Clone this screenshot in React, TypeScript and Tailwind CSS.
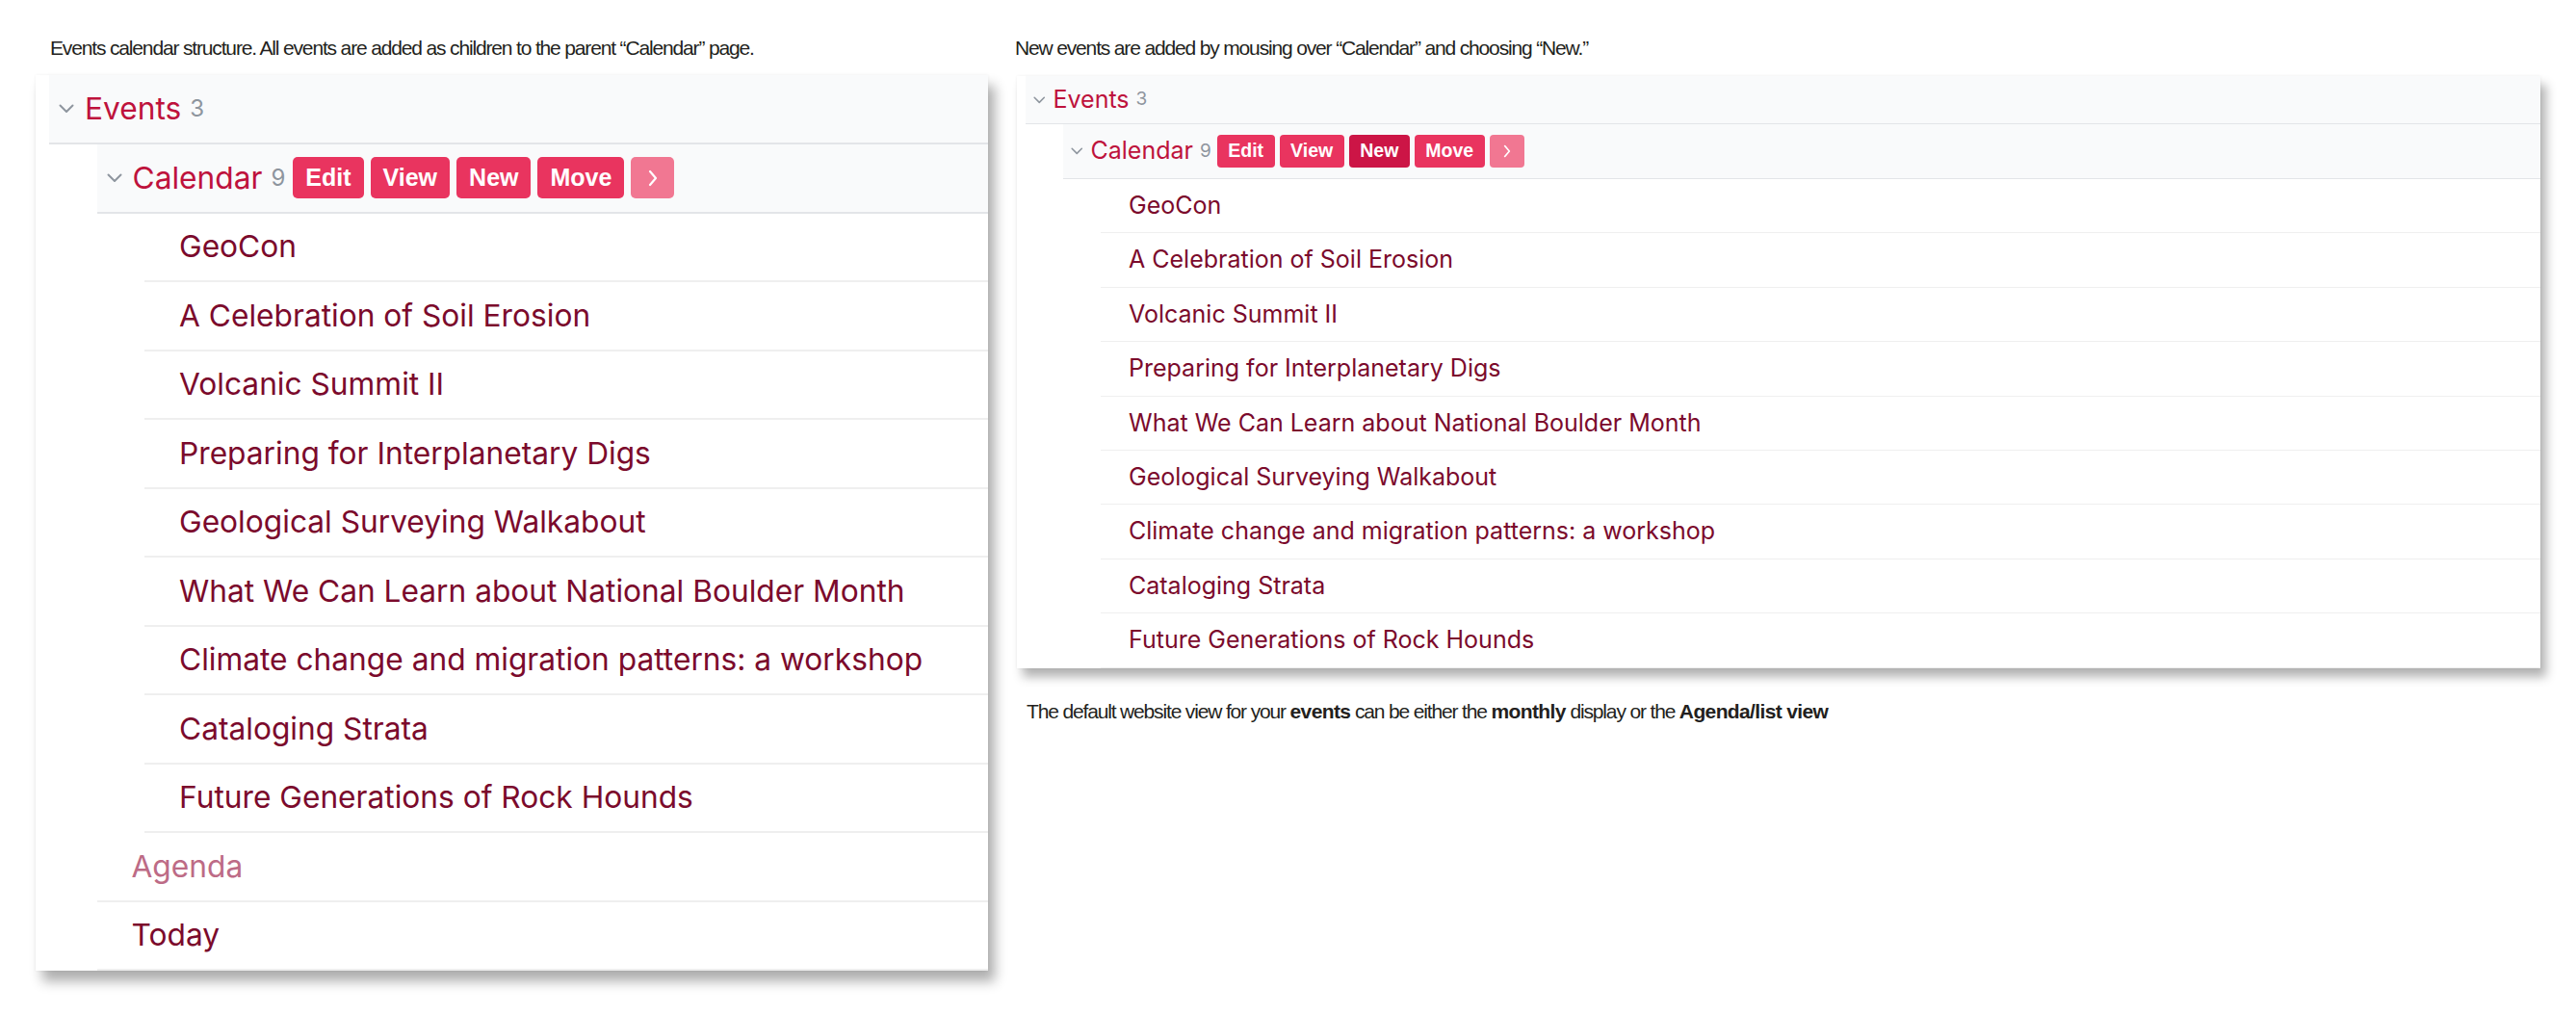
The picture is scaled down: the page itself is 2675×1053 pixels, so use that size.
import React from "react";

type Size = "lg" | "sm";

const SIZES = {
  lg: {
    panel: "pl-[14px] shadow-[7px_11px_12px_rgba(0,0,0,0.32),0_0_3px_rgba(0,0,0,0.06)]",
    rootRow: "h-[72px]",
    row: "h-[71.5px]",
    branchRow: "h-[71.5px]",
    border: "border-b-2",
    indent: "pl-[49.5px]",
    branchPad: "pl-[10px] gap-[11px]",
    leafPad: "pl-[36px]",
    title: "text-[31.7px]",
    count: "text-[24px] ml-[9px]",
    chevron: "w-[16px] h-[10px]",
    buttons: "ml-[8px] gap-[7px]",
    button: "h-[43px] px-[13px] text-[25px] rounded-[5px]",
    arrow: "w-[45px]",
    arrowIcon: "w-[10px] h-[18px]",
  },
  sm: {
    panel: "pl-[9px] shadow-[6px_9px_10px_rgba(0,0,0,0.3),0_0_3px_rgba(0,0,0,0.06)]",
    rootRow: "h-[50px]",
    row: "h-[56.4px]",
    branchRow: "h-[57px]",
    border: "border-b-[1.5px]",
    indent: "pl-[39px]",
    branchPad: "pl-[8px] gap-[8px]",
    leafPad: "pl-[29px]",
    title: "text-[25px]",
    count: "text-[19px] ml-[7px]",
    chevron: "w-[12.5px] h-[8px]",
    buttons: "ml-[6px] gap-[5px]",
    button: "h-[34px] px-[11.5px] text-[19.5px] rounded-[4px]",
    arrow: "w-[36px]",
    arrowIcon: "w-[8px] h-[14px]",
  },
};

const EVENTS = [
  "GeoCon",
  "A Celebration of Soil Erosion",
  "Volcanic Summit II",
  "Preparing for Interplanetary Digs",
  "Geological Surveying Walkabout",
  "What We Can Learn about National Boulder Month",
  "Climate change and migration patterns: a workshop",
  "Cataloging Strata",
  "Future Generations of Rock Hounds",
];

// the right screenshot has two of them the other way round
const EVENTS_ALT = [
  "GeoCon",
  "A Celebration of Soil Erosion",
  "Volcanic Summit II",
  "Preparing for Interplanetary Digs",
  "What We Can Learn about National Boulder Month",
  "Geological Surveying Walkabout",
  "Climate change and migration patterns: a workshop",
  "Cataloging Strata",
  "Future Generations of Rock Hounds",
];

function Chevron({ className }: { className: string }) {
  return (
    <svg viewBox="0 0 16 10" className={className} fill="none" stroke="#8e959e" strokeWidth="2" strokeLinecap="round" strokeLinejoin="round">
      <polyline points="1.5,1.5 8,8 14.5,1.5" />
    </svg>
  );
}

function Actions({ size, active }: { size: Size; active?: string }) {
  const s = SIZES[size];
  return (
    <div className={`flex items-center font-['Liberation_Sans',Arial,sans-serif] ${s.buttons}`}>
      {["Edit", "View", "New", "Move"].map((label) => (
        <span
          key={label}
          className={`flex items-center font-bold text-white ${s.button} ${
            label === active ? "bg-[#cc1546]" : "bg-[#e9345f]"
          }`}
        >
          {label}
        </span>
      ))}
      <span className={`flex items-center justify-center bg-[#f17792] ${s.button} ${s.arrow} px-0`}>
        <svg viewBox="0 0 10 18" className={s.arrowIcon} fill="none" stroke="white" strokeWidth="2.2" strokeLinecap="round" strokeLinejoin="round">
          <polyline points="2,2 8,9 2,16" />
        </svg>
      </span>
    </div>
  );
}

function BranchRow({ size, title, count, height, actions, active }: { size: Size; title: string; count: number; height: string; actions?: boolean; active?: string }) {
  const s = SIZES[size];
  return (
    <div className={`flex items-center bg-[#f9fafb] border-[#e3e5e8] ${height} ${s.border} ${s.branchPad}`}>
      <Chevron className={s.chevron} />
      <div className="flex items-center">
        <span className={`text-[#be123c] ${s.title}`}>{title}</span>
        <span className={`text-[#8e959e] ${s.count}`}>{count}</span>
        {actions && <Actions size={size} active={active} />}
      </div>
    </div>
  );
}

function LeafRow({ size, title, muted }: { size: Size; title: string; muted?: boolean }) {
  const s = SIZES[size];
  return (
    <div className={`flex items-center border-[#efefef] ${s.row} ${s.border} ${s.leafPad}`}>
      <span className={`${s.title} ${muted ? "text-[#bd6b86]" : "text-[#7b0a2c]"}`}>{title}</span>
    </div>
  );
}

function Tree({ size, events, active, showPages }: { size: Size; events: string[]; active?: string; showPages?: boolean }) {
  const s = SIZES[size];
  return (
    <div className={`bg-white font-['Inter','Liberation_Sans',sans-serif] ${s.panel}`}>
      <BranchRow size={size} title="Events" count={3} height={s.rootRow} />
      <div className={s.indent}>
        <BranchRow size={size} title="Calendar" count={9} height={s.branchRow} actions active={active} />
        <div className={s.indent}>
          {events.map((e) => (
            <LeafRow key={e} size={size} title={e} />
          ))}
        </div>
        {showPages && (
          <>
            <LeafRow size={size} title="Agenda" muted />
            <LeafRow size={size} title="Today" />
          </>
        )}
      </div>
    </div>
  );
}

const caption = "text-[21px] leading-[26px] text-[#231f20] font-['Liberation_Sans_Narrow','Liberation_Sans',sans-serif] tracking-[-0.055em] whitespace-nowrap";

export default function App() {
  return (
    <div className="w-[2675px] h-[1053px] bg-white flex overflow-hidden">
      {/* left: full tree */}
      <div className="ml-[37px] w-[989px] flex flex-col">
        <p className={`${caption} pt-[37px] mb-[15px] ml-[15px]`}>
          Events calendar structure. All events are added as children to the parent “Calendar” page.
        </p>
        <Tree size="lg" events={EVENTS} showPages />
      </div>

      {/* right: hover state on Calendar */}
      <div className="ml-[28px] w-[1584px] flex flex-col">
        <p className={`${caption} pt-[37px] mb-[16px]`}>
          New events are added by mousing over “Calendar” and choosing “New.”
        </p>
        <div className="ml-[2px]">
          <Tree size="sm" events={EVENTS_ALT} active="New" />
        </div>
        <p className={`${caption} mt-[32px] ml-[12px]`}>
          The default website view for your <b className="tracking-[-0.03em]">events</b> can be either the{" "}
          <b className="tracking-[-0.03em]">monthly</b> display or the <b className="tracking-[-0.03em]">Agenda/list view</b>
        </p>
      </div>
    </div>
  );
}
